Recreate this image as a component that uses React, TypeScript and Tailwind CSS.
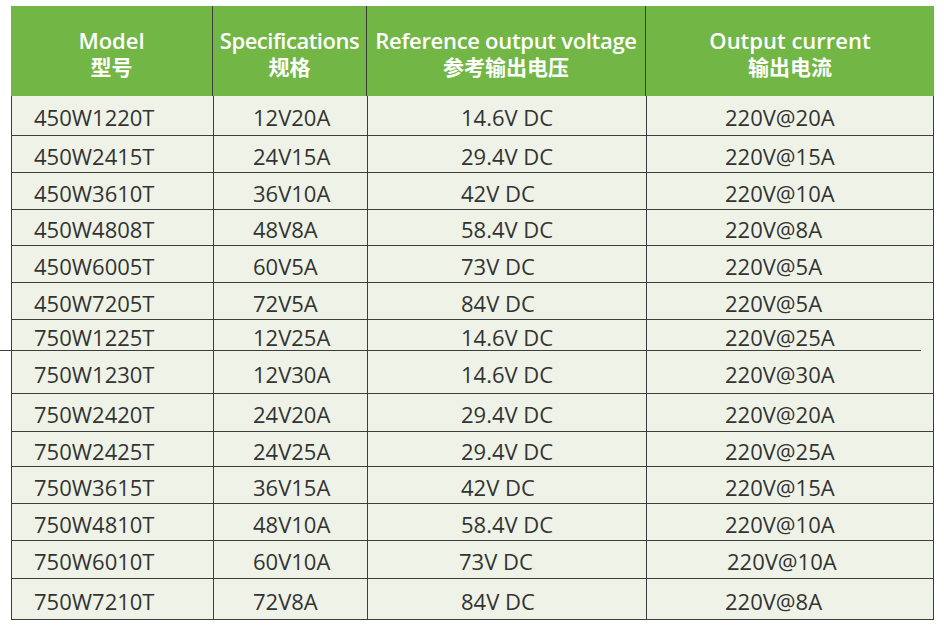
import React from "react";

type Row = { m: string; s: string; v: string; c: string; h: number; stray?: boolean; vp?: number; cp?: number };

const rows: Row[] = [
  { m: "450W1220T", s: "12V20A", v: "14.6V DC", c: "220V@20A", h: 40 },
  { m: "450W2415T", s: "24V15A", v: "29.4V DC", c: "220V@15A", h: 37 },
  { m: "450W3610T", s: "36V10A", v: "42V DC", c: "220V@10A", h: 37 },
  { m: "450W4808T", s: "48V8A", v: "58.4V DC", c: "220V@8A", h: 36 },
  { m: "450W6005T", s: "60V5A", v: "73V DC", c: "220V@5A", h: 37 },
  { m: "450W7205T", s: "72V5A", v: "84V DC", c: "220V@5A", h: 37 },
  { m: "750W1225T", s: "12V25A", v: "14.6V DC", c: "220V@25A", h: 31, stray: true },
  { m: "750W1230T", s: "12V30A", v: "14.6V DC", c: "220V@30A", h: 43 },
  { m: "750W2420T", s: "24V20A", v: "29.4V DC", c: "220V@20A", h: 38 },
  { m: "750W2425T", s: "24V25A", v: "29.4V DC", c: "220V@25A", h: 35 },
  { m: "750W3615T", s: "36V15A", v: "42V DC", c: "220V@15A", h: 37 },
  { m: "750W4810T", s: "48V10A", v: "58.4V DC", c: "220V@10A", h: 37 },
  { m: "750W6010T", s: "60V10A", v: "73V DC", c: "220V@10A", h: 38, vp: 91, cp: 80 },
  { m: "750W7210T", s: "72V8A", v: "84V DC", c: "220V@8A", h: 41 },
];

const font = { fontFamily: '"Open Sans", "Noto Sans CJK SC", sans-serif' };

export default function App() {
  return (
    <div className="w-[944px] h-[626px] bg-white pt-[6px] pl-[11px] text-[#333333]" style={font}>
      <div className="w-[923px]">
        <div className="flex h-[90px] bg-[#72b646] text-white font-semibold">
          <div className="w-[202px] border-r border-[#3d3d3d] flex flex-col items-center justify-center pt-[5px]">
            <div className="text-[22px] leading-[27px]">Model</div>
            <div className="text-[21px] leading-[27px] font-bold">型号</div>
          </div>
          <div className="w-[154px] border-r border-[#3d3d3d] flex flex-col items-center justify-center pt-[5px]">
            <div className="text-[22px] leading-[27px] tracking-[-0.5px] whitespace-nowrap">Specifications</div>
            <div className="text-[21px] leading-[27px] font-bold">规格</div>
          </div>
          <div className="w-[279px] border-r border-[#3d3d3d] flex flex-col items-center justify-center pt-[5px]">
            <div className="text-[22px] leading-[27px] tracking-[-0.3px] whitespace-nowrap">Reference output voltage</div>
            <div className="text-[21px] leading-[27px] font-bold">参考输出电压</div>
          </div>
          <div className="w-[288px] flex flex-col items-center justify-center pt-[5px]">
            <div className="text-[22px] leading-[27px]">Output current</div>
            <div className="text-[21px] leading-[27px] font-bold">输出电流</div>
          </div>
        </div>
        <div className="bg-[#eff3e7] border-l border-r border-[#3d3d3d] text-[22px]">
          {rows.map((r, i) => (
            <div
              key={i}
              className={"relative flex " + (r.stray ? "" : "border-b border-[#3d3d3d]")}
              style={{ height: r.h }}
            >
              <div className="w-[202px] flex items-center pt-[4px] pl-[22px] border-r border-[#3d3d3d]">{r.m}</div>
              <div className="w-[154px] flex items-center pt-[4px] pl-[39px] border-r border-[#3d3d3d]">{r.s}</div>
              <div
                className="w-[279px] flex items-center pt-[4px] border-r border-[#3d3d3d]"
                style={{ paddingLeft: r.vp ?? 93 }}
              >
                {r.v}
              </div>
              <div className="flex-1 flex items-center pt-[4px]" style={{ paddingLeft: r.cp ?? 78 }}>
                {r.c}
              </div>
              {r.stray && (
                <div className="absolute left-[-12px] bottom-0 w-[921px] h-px bg-[#3d3d3d]" />
              )}
            </div>
          ))}
        </div>
      </div>
    </div>
  );
}
